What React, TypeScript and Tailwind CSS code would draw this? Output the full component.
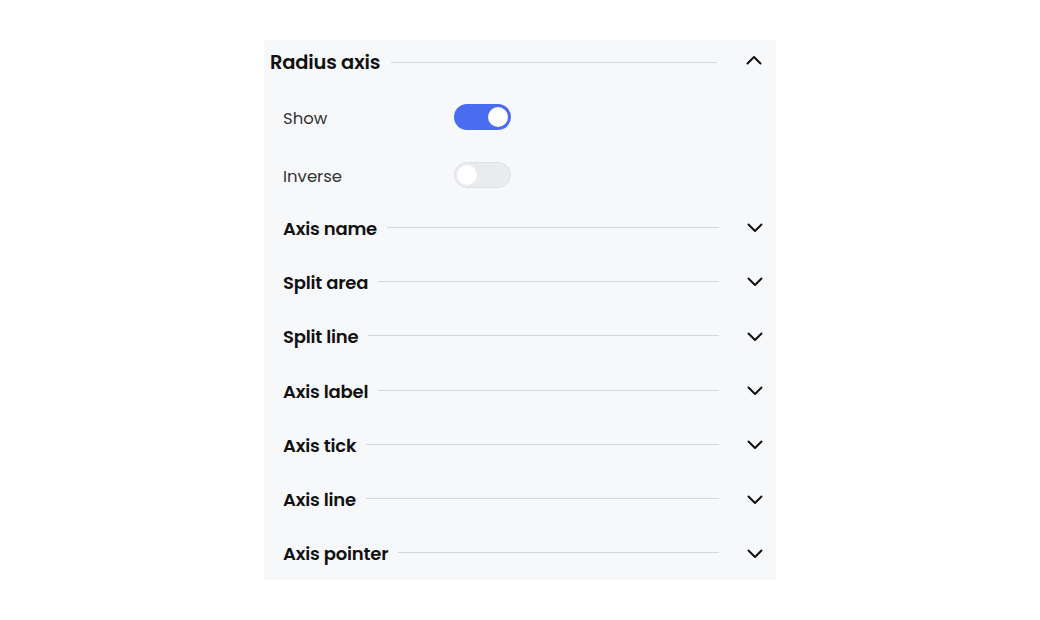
import React from "react";

const font = { fontFamily: "Poppins, Inter, 'Noto Sans', sans-serif" };

function Chevron({ up }: { up?: boolean }) {
  return (
    <svg width="16" height="10" viewBox="0 0 16 10" className="shrink-0" fill="none">
      <path
        d={up ? "M1.5 8.5 L8 2 L14.5 8.5" : "M1.5 1.5 L8 8 L14.5 1.5"}
        stroke="#111"
        strokeWidth="2"
        strokeLinecap="round"
        strokeLinejoin="round"
      />
    </svg>
  );
}

function Toggle({ on }: { on: boolean }) {
  return (
    <div
      className={
        on
          ? "w-[57px] h-[26px] rounded-full bg-[#4a6cf1] flex items-center justify-end px-[3px]"
          : "w-[57px] h-[26px] rounded-full bg-[#e9ebee] border border-[#dfe2e6] flex items-center justify-start px-[2px]"
      }
    >
      <div className="w-[20px] h-[20px] rounded-full bg-white" />
    </div>
  );
}

const sections = [
  "Axis name",
  "Split area",
  "Split line",
  "Axis label",
  "Axis tick",
  "Axis line",
  "Axis pointer",
];

export default function App() {
  return (
    <div className="w-[1040px] h-[620px] bg-white pt-[40px] pl-[264px]" style={font}>
      <div className="w-[512px] h-[540px] bg-[#f7f8fa] flex flex-col overflow-hidden">
        <div className="h-[43px] shrink-0 pt-[1px] flex items-center pl-[6px]">
          <span className="text-[19.5px] font-semibold text-[#111] tracking-[-0.2px] translate-y-[1px]">Radius axis</span>
          <div className="flex-1 ml-[11px] h-px bg-[#d5d7db]" />
          <div className="ml-[29px] mr-[14px] flex items-center -translate-y-[2px]">
            <Chevron up />
          </div>
        </div>
        <div className="shrink-0 pt-[6px] pl-[19px]">
          <div className="h-[56px] flex items-center">
            <span className="w-[171px] text-[16.5px] text-[#333] translate-y-[2px]">Show</span>
            <Toggle on />
          </div>
          <div className="h-[55px] pt-[17px]">
            <div className="flex items-center h-[26px]">
              <span className="w-[171px] text-[16.5px] text-[#333] translate-y-[2px]">Inverse</span>
              <Toggle on={false} />
            </div>
          </div>
        </div>
        {sections.map((s) => (
          <div key={s} className="h-[54.3px] shrink-0 flex items-center pl-[19px]">
            <span className="text-[18px] font-semibold text-[#111] tracking-[-0.2px] translate-y-[1px]">{s}</span>
            <div className="flex-1 ml-[10px] h-px bg-[#d5d7db]" />
            <div className="ml-[28px] mr-[13px] flex items-center translate-y-[1px]">
              <Chevron />
            </div>
          </div>
        ))}
      </div>
    </div>
  );
}
